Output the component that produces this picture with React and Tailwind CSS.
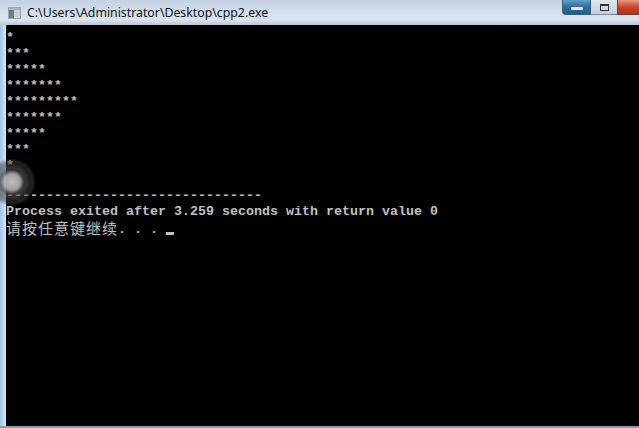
import React from "react";

const mono = { fontFamily: '"Liberation Mono", monospace' };

function Row({ children, className = "" }) {
  return (
    <div className={"h-[16px] leading-[16px] whitespace-pre " + className}>{children}</div>
  );
}

function Stars({ n }) {
  return (
    <Row>
      <span className="relative top-[2px]">{"*".repeat(n)}</span>
    </Row>
  );
}

export default function App() {
  const stars = [1, 3, 5, 7, 9, 7, 5, 3, 1];
  return (
    <div className="relative w-[639px] h-[428px] overflow-hidden flex flex-col bg-black">
      {/* title bar */}
      <div className="h-[25px] flex items-center bg-[linear-gradient(to_bottom,#c3d3e4,#d2dfec_45%,#d9e4ef_80%,#b9c7d6)]">
        <div className="w-[27px] flex items-center justify-center pl-[2px]">
          <svg width="13" height="12" viewBox="0 0 13 12">
            <rect x="0.5" y="0.5" width="12" height="11" fill="#eef1f3" stroke="#9aa4ac" />
            <rect x="1" y="3" width="5" height="8" fill="#6e7e72" />
            <rect x="6" y="3" width="6" height="8" fill="#c9d2c6" />
            <rect x="1" y="1" width="11" height="2" fill="#a9b4bd" />
          </svg>
        </div>
        <div
          className="text-[12.3px] text-[#111] leading-none pt-[1px]"
          style={{ fontFamily: '"Noto Sans", sans-serif' }}
        >
          C:\Users\Administrator\Desktop\cpp2.exe
        </div>
        <div className="flex-1" />
        <div className="self-start flex h-[15px]">
          <div className="w-[29px] h-full rounded-bl-[4px] border border-t-0 border-[#3a5a7a] bg-[linear-gradient(to_bottom,#5fa0c8,#2a6f9e_50%,#1e5f8a)] flex items-center justify-center">
            <div className="w-[12px] h-[3px] bg-[#f6e0ee] rounded-[1px] mt-[3px]" />
          </div>
          <div className="w-[26px] h-full border-b border-[#7a8a9a] bg-[linear-gradient(to_bottom,#dfe7ef,#c2cfdc)] flex items-center justify-center">
            <div className="w-[9px] h-[7px] border border-[#333] border-t-2" />
          </div>
          <div className="w-[22px] h-full border-b border-l border-[#7a3a2a] bg-[linear-gradient(to_bottom,#e89a80,#c8452a_50%,#b8321a)]" />
        </div>
      </div>

      {/* body */}
      <div className="flex-1 flex min-h-0">
        <div className="w-[6px] bg-[linear-gradient(to_right,#a3c2e6,#bcd4ef_50%,#dce8f5)]" />
        <div
          className="flex-1 bg-black pt-[3px] text-[13.33px] font-bold text-[#c0c0c0]"
          style={mono}
        >
          {stars.map((n, i) => (
            <Stars key={i} n={n} />
          ))}
          <Row> </Row>
          <Row>{"-".repeat(32)}</Row>
          <Row>Process exited after 3.259 seconds with return value 0</Row>
          <Row className="flex">
            <span
              className="font-normal text-[15px] tracking-[1px] leading-[16px] h-[16px]"
              style={{ fontFamily: '"Noto Sans CJK SC", sans-serif' }}
            >
              请按任意键继续
            </span>
            <span className="relative top-[2px]">. . . </span>
            <span className="w-[8px] h-[16px] flex flex-col justify-end pb-[1px]">
              <span className="block h-[3px] bg-[#c0c0c0]" />
            </span>
          </Row>
        </div>
      </div>
      <div className="h-[2px] bg-[#8d9bab]" />

      {/* click ripple overlay */}
      <div className="absolute left-[-12px] top-[158px] w-[48px] h-[48px] rounded-full bg-[radial-gradient(circle,rgba(200,200,200,0.95)_0,rgba(170,170,170,0.95)_8px,rgba(120,120,120,0.9)_10px,rgba(70,70,70,0.75)_12px,rgba(80,80,80,0.6)_15px,rgba(55,55,55,0.55)_18px,rgba(70,70,70,0.45)_21px,rgba(20,20,20,0)_24px)]" />
    </div>
  );
}
